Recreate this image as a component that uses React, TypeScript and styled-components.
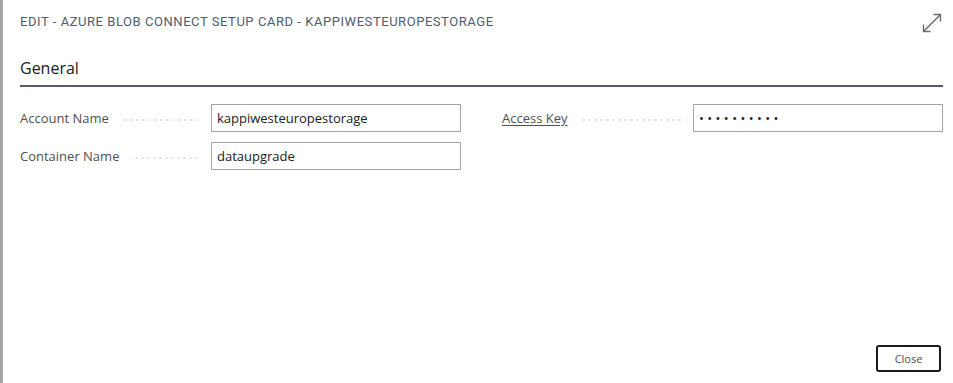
import styled, { createGlobalStyle } from 'styled-components';

const GlobalStyle = createGlobalStyle`
    html, body {
        margin: 0;
        padding: 0;
        background: #ffffff;
    }
`;

const fields = {
    left: [
        { label: 'Account Name', value: 'kappiwesteuropestorage' },
        { label: 'Container Name', value: 'dataupgrade' },
    ],
    right: [{ label: 'Access Key', value: '••••••••••', link: true }],
};

const ExpandIcon = () => (
    <svg width="22" height="22" viewBox="0 0 22 22" fill="none" stroke="#6b6b6b" strokeWidth="1.4">
        <path d="M2.5 19.5 L19.5 2.5" />
        <path d="M12.5 2.5 H19.5 V9.5" />
        <path d="M2.5 12.5 V19.5 H9.5" />
    </svg>
);

const App = () => {
    return (
        <>
            <GlobalStyle />
            <Dialog>
                <Header>
                    <Title>Edit - Azure Blob Connect Setup Card - kappiwesteuropestorage</Title>
                    <IconButton>
                        <ExpandIcon />
                    </IconButton>
                </Header>
                <Section>
                    <SectionTitle>General</SectionTitle>
                    <Columns>
                        <Column>
                            {fields.left.map(f => (
                                <FieldRow key={f.label}>
                                    <Label>
                                        <LabelText>{f.label}</LabelText>
                                        <Leader />
                                    </Label>
                                    <Input readOnly value={f.value} />
                                </FieldRow>
                            ))}
                        </Column>
                        <Column>
                            {fields.right.map(f => (
                                <FieldRow key={f.label}>
                                    <Label>
                                        <LabelText $link={f.link}>{f.label}</LabelText>
                                        <Leader />
                                    </Label>
                                    <Input readOnly value={f.value} $secret />
                                </FieldRow>
                            ))}
                        </Column>
                    </Columns>
                </Section>
                <Footer>
                    <CloseButton>Close</CloseButton>
                </Footer>
            </Dialog>
        </>
    );
};
export default App;

const Dialog = styled.div`
    display: flex;
    flex-direction: column;
    width: 953px;
    height: 383px;
    box-sizing: border-box;
    border-left: 3px solid #a6a6a6;
    padding: 0 10px 0 17px;
    background: #fff;
    font-family: 'Open Sans', 'Noto Sans', sans-serif;
`;

const Header = styled.div`
    display: flex;
    justify-content: space-between;
    align-items: flex-start;
    height: 57px;
`;

const Title = styled.h1`
    margin: 14px 0 0 0;
    font-family: Roboto, 'DejaVu Sans Condensed', sans-serif;
    font-size: 13px;
    font-weight: 400;
    text-transform: uppercase;
    letter-spacing: 0.55px;
    color: #505c6d;
`;

const IconButton = styled.div`
    margin-top: 12px;
    width: 22px;
    height: 22px;
`;

const Section = styled.div`
    flex: 1;
`;

const SectionTitle = styled.h2`
    margin: 0;
    padding-bottom: 6px;
    font-size: 16px;
    font-weight: 400;
    color: #212121;
    border-bottom: 2px solid #505c6d;
    line-height: 22px;
`;

const Columns = styled.div`
    display: grid;
    grid-template-columns: 441px 441px;
    column-gap: 41px;
    padding-top: 17px;
`;

const Column = styled.div`
    display: flex;
    flex-direction: column;
    gap: 10px;
`;

const FieldRow = styled.div`
    display: flex;
    align-items: center;
    height: 28px;
`;

const Label = styled.div`
    display: flex;
    align-items: center;
    width: 191px;
    padding-right: 11px;
    box-sizing: border-box;
`;

const LabelText = styled.span<{ $link?: boolean }>`
    font-size: 13px;
    color: #505050;
    white-space: nowrap;
    text-decoration: ${props => (props.$link ? 'underline' : 'none')};
    text-underline-offset: 2px;
`;

const Leader = styled.span`
    flex: 1;
    height: 2px;
    margin-left: 12px;
    margin-top: 4px;
    background-image: radial-gradient(circle, #c8c8c8 0.6px, transparent 0.9px);
    background-size: 6px 2px;
    background-repeat: repeat-x;
    background-position: right center;
`;

const Input = styled.input<{ $secret?: boolean }>`
    width: 250px;
    height: 28px;
    box-sizing: border-box;
    border: 1px solid #a6a6a6;
    padding: 0 5px;
    font-family: 'Open Sans', 'Noto Sans', sans-serif;
    font-size: 13px;
    letter-spacing: ${props => (props.$secret ? '3.4px' : '0')};
    color: #212121;
    outline: none;
`;

const Footer = styled.div`
    display: flex;
    justify-content: flex-end;
    padding: 0 2px 11px 0;
`;

const CloseButton = styled.button`
    width: 65px;
    height: 27px;
    border: 2px solid #1a1a1a;
    border-radius: 3px;
    background: #fff;
    font-family: 'Open Sans', 'Noto Sans', sans-serif;
    font-size: 11px;
    color: #505050;
    cursor: pointer;
`;
